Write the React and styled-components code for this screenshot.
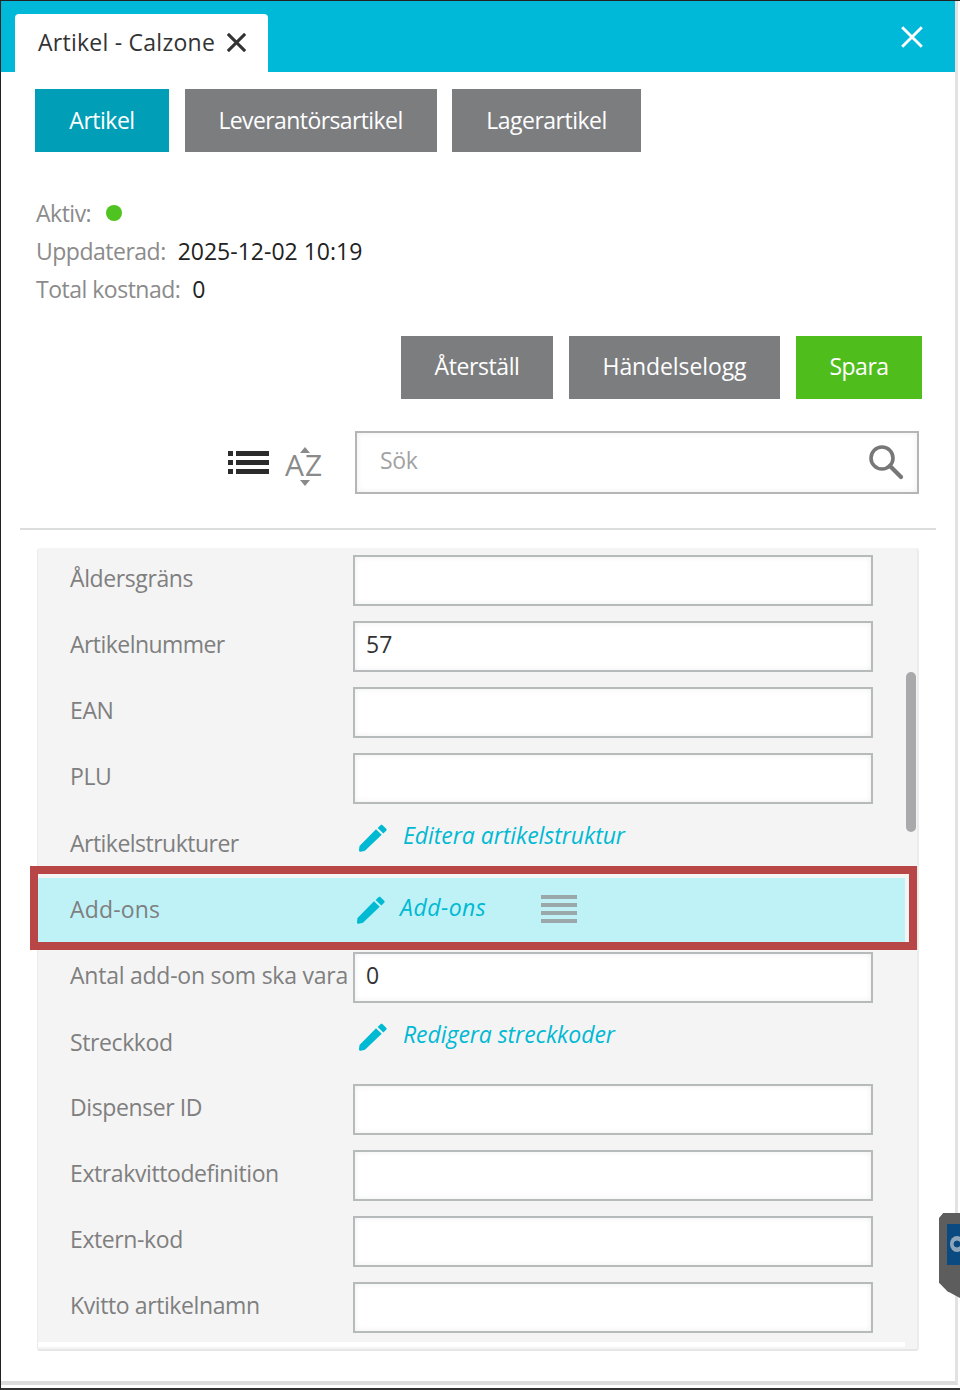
import React from "react";
import styled, { createGlobalStyle } from "styled-components";

const GlobalStyle = createGlobalStyle`
    html, body {
        margin: 0;
        padding: 0;
        background: #fff;
    }
    body {
        font-family: "Open Sans", "Noto Sans", sans-serif;
    }
`;

const Frame = styled.div`
    position: relative;
    box-sizing: border-box;
    width: 960px;
    height: 1390px;
    overflow: hidden;
    background: #fff;
    border-top: 1px solid #222;
    border-left: 1px solid #222;
    border-bottom: 2px solid #333;
`;

const Window = styled.div`
    box-sizing: border-box;
    width: 957px;
    height: 1384px;
    border-right: 3px solid #e2e2e2;
    border-bottom: 4px solid #dcdcdc;
`;

const Header = styled.div`
    display: flex;
    align-items: flex-end;
    justify-content: space-between;
    box-sizing: border-box;
    height: 71px;
    padding: 0 32px 0 14px;
    background: #00b9d9;
`;

const WindowTab = styled.div`
    display: flex;
    align-items: center;
    gap: 12px;
    box-sizing: border-box;
    width: 253px;
    height: 58px;
    padding: 0 0 2px 23px;
    border-radius: 4px 4px 0 0;
    background: #fff;
    color: #333;
    font-size: 23px;
    font-weight: 500;
    letter-spacing: 0.25px;
    white-space: nowrap;
`;

const CloseButton = styled.div`
    display: flex;
    align-self: center;
    color: #fff;
`;

const Body = styled.div`
    padding: 17px 0 0 34px;
`;

const ButtonRow = styled.div`
    display: flex;
    justify-content: ${(p) => (p.$end ? "flex-end" : "flex-start")};
    gap: ${(p) => (p.$end ? "16px" : "15.5px")};
    padding-right: ${(p) => (p.$end ? "33px" : "0")};
`;

const Button = styled.div`
    display: flex;
    align-items: center;
    justify-content: center;
    box-sizing: border-box;
    width: ${(p) => p.$width}px;
    height: 63px;
    padding-bottom: ${(p) => (p.$high ? "3px" : "1px")};
    background: ${(p) => p.$bg || "#7c7d7f"};
    color: #fff;
    font-size: 23px;
    letter-spacing: ${(p) => p.$spacing || "-0.5px"};
`;

const Info = styled.div`
    display: flex;
    flex-direction: column;
    margin: 42px 0 28px 1px;
`;

const InfoRow = styled.div`
    display: flex;
    align-items: center;
    gap: 12px;
    height: 38px;
    padding-bottom: 1px;
    box-sizing: border-box;
    font-size: 23px;
    color: #222;
`;

const InfoLabel = styled.span`
    color: #8b8b8b;
    letter-spacing: -0.5px;
`;

const Dot = styled.span`
    width: 16px;
    height: 16px;
    margin-left: 3px;
    border-radius: 50%;
    background: #4fc31f;
`;

const SearchRow = styled.div`
    display: flex;
    align-items: center;
    margin: 32px 0 0 193px;
`;

const ListIcon = styled.svg`
    display: block;
    margin-right: 15px;
`;

const SortIcon = styled.div`
    position: relative;
    width: 40px;
    height: 40px;
    margin-right: 31px;
    padding-top: 2px;
    box-sizing: border-box;
    color: #8a8a8a;
    font-size: 30px;
    font-weight: 500;
    line-height: 40px;
    letter-spacing: 1px;
    text-align: center;
    white-space: nowrap;
`;

const SortArrow = styled.svg`
    position: absolute;
    left: 16px;
    top: ${(p) => (p.$down ? "37px" : "4px")};
`;

const SearchBox = styled.div`
    display: flex;
    align-items: center;
    justify-content: space-between;
    box-sizing: border-box;
    width: 564px;
    height: 63px;
    padding: 0 13px 2px 23px;
    border: 2px solid #b4b6b6;
    color: #a2a2a2;
    font-size: 23px;
    letter-spacing: -0.4px;
    box-shadow: inset 0 0 6px #eeeeee;
`;

const SearchHint = styled.span`
    margin-top: -4px;
`;

const Divider = styled.div`
    width: 916px;
    height: 2px;
    margin: 34px 0 18px -15px;
    background: #dcdede;
`;

const Panel = styled.div`
    position: relative;
    box-sizing: border-box;
    width: 882px;
    height: 803px;
    margin-left: 2px;
    padding-right: 12px;
    background: #f4f4f4;
    border-radius: 3px;
    border-right: 2px solid #ececec;
    border-bottom: 2px solid #e6e6e6;
    border-left: 1px solid #ececec;
`;

const Rows = styled.div`
    height: 794px;
    background: #f4f4f4;
    border-bottom: 5px solid #fff;
`;

const Row = styled.div`
    display: flex;
    box-sizing: border-box;
    height: 66.1px;
    padding-top: 7px;
    background: ${(p) => (p.$active ? "#bff2f7" : "transparent")};
`;

const Label = styled.div`
    box-sizing: border-box;
    width: 315px;
    flex: none;
    padding: ${(p) => (p.$low ? "4px" : "3px")} 0 0 32px;
    color: #7f7f7f;
    font-size: 23px;
    line-height: 40px;
    letter-spacing: ${(p) => p.$spacing || "-0.4px"};
    white-space: nowrap;
`;

const Input = styled.div`
    box-sizing: border-box;
    width: 520px;
    height: 51px;
    padding: 0 11px 4px;
    border: 2px solid #b7baba;
    background: #fff;
    color: #333;
    font-size: 23px;
    line-height: 42px;
    box-shadow: inset 0 0 6px #efefef;
`;

const LinkCell = styled.div`
    display: flex;
    align-items: flex-start;
    gap: ${(p) => (p.$active ? "14px" : "15px")};
    padding: ${(p) => (p.$active ? "11px 0 0 3px" : "5px 0 0 5px")};
`;

const LinkText = styled.span`
    margin-top: -9px;
    color: #00b9d3;
    font-size: 23px;
    font-style: italic;
    line-height: 40px;
    letter-spacing: ${(p) => (p.$active ? "0.5px" : "-0.05px")};
`;

const Handle = styled.svg`
    display: block;
    margin: -1px 0 0 41px;
`;

const ScrollThumb = styled.div`
    position: absolute;
    top: 124px;
    right: 1px;
    width: 10px;
    height: 160px;
    border-radius: 5px;
    background: #a9a9ab;
`;

const Highlight = styled.div`
    position: absolute;
    top: 865px;
    left: 29px;
    box-sizing: border-box;
    width: 887px;
    height: 84px;
    border: 8px solid #b84646;
`;

const SideTab = styled.div`
    position: absolute;
    top: 1212px;
    left: 938px;
    width: 21px;
    height: 85px;
    background: #5d5d5d;
    clip-path: polygon(20% 0, 100% 0, 100% 100%, 40% 92%, 0 82%, 0 6%);
`;

const SideTabLogo = styled.div`
    position: absolute;
    top: 11px;
    left: 8px;
    width: 13px;
    height: 41px;
    overflow: hidden;
    background: #0b4a80;

    &::after {
        content: "";
        position: absolute;
        top: 12px;
        left: 3px;
        width: 14px;
        height: 16px;
        border-radius: 50%;
        background: radial-gradient(circle, #0b4a80 0 30%, #8ea6ba 35%);
    }
`;

const PencilIcon = () => (
    <svg width="30" height="29" viewBox="2 2.5 20 20" preserveAspectRatio="none" fill="#00b9d3">
        <path d="M3 17.7c0 .9-.4 2.4-.3 3.2.1.5.6.9 1.1.8.9-.1 2.2-.5 3-.9L17.8 9.9l-3.8-3.7L3 17.7zM20.8 7.2c.4-.4.4-1 0-1.4l-2.4-2.4c-.4-.4-1-.4-1.4 0L15.1 5.2l3.8 3.8 1.9-1.8z" />
    </svg>
);

const Cross = ({ size, color, width }) => (
    <svg width={size} height={size} viewBox="0 0 20 20" stroke={color} strokeWidth={width} strokeLinecap="square">
        <path d="M2 2 18 18M18 2 2 18" />
    </svg>
);

const rows = [
    { label: "Åldersgräns", value: "" },
    { label: "Artikelnummer", value: "57", spacing: "-0.55px" },
    { label: "EAN", value: "" },
    { label: "PLU", value: "" },
    { label: "Artikelstrukturer", link: "Editera artikelstruktur", spacing: "-0.52px" },
    { label: "Add-ons", link: "Add-ons", active: true, spacing: "0.17px" },
    { label: "Antal add-on som ska vara", value: "0", spacing: "-0.24px" },
    { label: "Streckkod", link: "Redigera streckkoder" },
    { label: "Dispenser ID", value: "" },
    { label: "Extrakvittodefinition", value: "" },
    { label: "Extern-kod", value: "" },
    { label: "Kvitto artikelnamn", value: "" },
];

export default function App() {
    return (
        <Frame>
            <GlobalStyle />
            <Window>
                <Header>
                    <WindowTab>
                        Artikel - Calzone
                        <Cross size={19} color="#333" width={3.2} />
                    </WindowTab>
                    <CloseButton>
                        <Cross size={22} color="#fff" width={2.6} />
                    </CloseButton>
                </Header>
                <Body>
                    <ButtonRow>
                        <Button $width={134} $bg="#009fb7">Artikel</Button>
                        <Button $width={252} $spacing="-0.6px">Leverantörsartikel</Button>
                        <Button $width={189}>Lagerartikel</Button>
                    </ButtonRow>
                    <Info>
                        <InfoRow>
                            <InfoLabel>Aktiv:</InfoLabel>
                            <Dot />
                        </InfoRow>
                        <InfoRow>
                            <InfoLabel>Uppdaterad:</InfoLabel>
                            <span>2025-12-02 10:19</span>
                        </InfoRow>
                        <InfoRow>
                            <InfoLabel>Total kostnad:</InfoLabel>
                            <span>0</span>
                        </InfoRow>
                    </Info>
                    <ButtonRow $end>
                        <Button $high $width={152} $spacing="-0.4px">Återställ</Button>
                        <Button $high $width={211} $spacing="-0.1px">Händelselogg</Button>
                        <Button $high $width={126} $bg="#4fbd1c">Spara</Button>
                    </ButtonRow>
                    <SearchRow>
                        <ListIcon width="41" height="24" viewBox="0 0 41 24" fill="#2b2b2b">
                            <rect x="0" y="0" width="5" height="5" />
                            <rect x="8" y="0" width="33" height="5" />
                            <rect x="0" y="9" width="5" height="5" />
                            <rect x="8" y="9" width="33" height="5" />
                            <rect x="0" y="18" width="5" height="5" />
                            <rect x="8" y="18" width="33" height="5" />
                        </ListIcon>
                        <SortIcon>
                            <SortArrow width="10" height="6" viewBox="0 0 10 6" fill="#8a8a8a">
                                <path d="M5 0 10 6H0z" />
                            </SortArrow>
                            AZ
                            <SortArrow $down width="10" height="6" viewBox="0 0 10 6" fill="#8a8a8a">
                                <path d="M0 0H10L5 6z" />
                            </SortArrow>
                        </SortIcon>
                        <SearchBox>
                            <SearchHint>Sök</SearchHint>
                            <svg width="36" height="36" viewBox="0 0 36 36" fill="none" stroke="#777" strokeLinecap="round">
                                <circle cx="14" cy="14" r="11" strokeWidth="3.6" />
                                <path d="M22 22 33 33" strokeWidth="4.2" />
                            </svg>
                        </SearchBox>
                    </SearchRow>
                    <Divider />
                    <Panel>
                        <Rows>
                            {rows.map((row) => (
                                <Row key={row.label} $active={row.active}>
                                    <Label $low={row.link} $spacing={row.spacing}>{row.label}</Label>
                                    {row.link ? (
                                        <LinkCell $active={row.active}>
                                            <PencilIcon />
                                            <LinkText $active={row.active}>{row.link}</LinkText>
                                            {row.active && (
                                                <Handle width="36" height="28" viewBox="0 0 36 28" fill="#9aa8aa">
                                                    <rect y="0" width="36" height="4" />
                                                    <rect y="8" width="36" height="4" />
                                                    <rect y="16" width="36" height="4" />
                                                    <rect y="24" width="36" height="4" />
                                                </Handle>
                                            )}
                                        </LinkCell>
                                    ) : (
                                        <Input>{row.value}</Input>
                                    )}
                                </Row>
                            ))}
                        </Rows>
                        <ScrollThumb />
                    </Panel>
                </Body>
            </Window>
            <Highlight />
            <SideTab>
                <SideTabLogo />
            </SideTab>
        </Frame>
    );
}
